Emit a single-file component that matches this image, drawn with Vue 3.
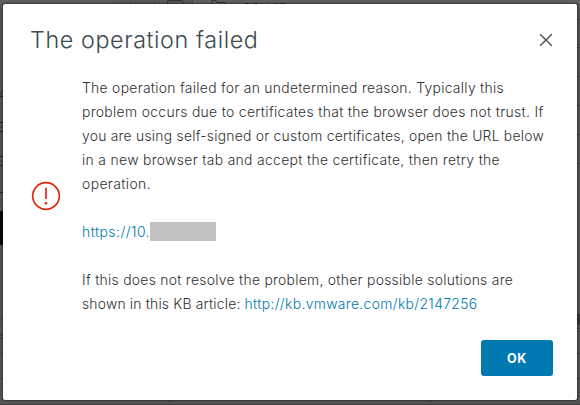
<script setup>
const intro = [
  { text: 'The operation failed for an undetermined reason. Typically this', width: 422 },
  { text: 'problem occurs due to certificates that the browser does not trust. If', width: 461.5 },
  { text: 'you are using self-signed or custom certificates, open the URL below', width: 462 },
  { text: 'in a new browser tab and accept the certificate, then retry the', width: 418 },
  { text: 'operation.', width: 69 },
]

// Spreads a line's letters so that it fills its measure.
const vFit = {
  mounted(el, { value }) {
    const natural = el.getBoundingClientRect().width
    el.style.letterSpacing = `${(value - natural) / el.textContent.length}px`
  },
}
</script>

<template>
  <div class="page">
    <svg class="backdrop" width="580" height="405" viewBox="0 0 580 405" aria-hidden="true">
      <rect width="580" height="405" fill="#555" />
      <rect width="580" height="4" fill="#606060" />
      <rect x="113" width="80" height="4" fill="#585858" />
      <path d="M130.5 0v4M154.5 0v4M192.5 0v4" stroke="#4b4b4b" />
      <path d="M167.500 4V1.500q0-1 1-1h13q1 0 1 1V4" fill="none" stroke="#333" />
      <path d="M212 4V.5h4l1 2h8v1.500" fill="none" stroke="#333" />
      <text x="243" y="10.500" textLength="43" class="behind">CPU 15</text>
      <path d="M0 96.500h3M0 122.500h3M0 131.500h3M0 156.500h3M0 165.500h3M0 192.500h3" stroke="#222" />
      <path d="M0 127.500h3M0 161.500h3M0 318.500h3M0 353.500h3M0 378.500h3" stroke="#414141" />
      <path d="M0 95l3-5" stroke="#26323c" />
      <rect y="211" width="3" height="34" fill="#05090c" />
      <path d="M0 335h3M0 338.500h3" stroke="#263238" />
      <path d="M577 19.500h3M577 47.500h3M577 76.500h3M577 105.500h3M577 134.500h3M577 163.500h3M577 328.500h3M577 353.500h3M577 378.500h3" stroke="#424242" />
      <rect x="577" y="314" width="3" height="11" fill="#383838" />
      <path d="M0 404.500h580M169.500 400v2M430.500 400v2" stroke="#3f3f3f" />
    </svg>

    <section class="dialog" role="dialog" aria-labelledby="title">
      <header class="head">
        <h1 id="title"><span v-fit="228.5">The operation failed</span></h1>
        <button class="close" aria-label="Close">
          <svg width="14" height="14" viewBox="0 0 14 14">
            <path d="M1.200 1.200l11.600 11.600M12.800 1.200L1.200 12.800" />
          </svg>
        </button>
      </header>

      <div class="body">
        <svg class="alert" width="30" height="30" viewBox="0 0 30 30">
          <circle cx="15" cy="15" r="13.300" />
          <path d="M15 6.700v11.300" />
          <circle class="dot" cx="15" cy="22.200" r="1.300" />
        </svg>
        <div class="message">
          <div v-for="line in intro" :key="line.text" class="line">
            <span v-fit="line.width">{{ line.text }}</span>
          </div>
          <div class="line gap">
            <a v-fit="68">https://10.</a><span class="masked"></span>
          </div>
          <div class="line gap"><span v-fit="431">If this does not resolve the problem, other possible solutions are</span></div>
          <div class="line split">
            <span v-fit="158.5">shown in this KB article:</span>
            <a v-fit="233">http://kb.vmware.com/kb/2147256</a>
          </div>
        </div>
      </div>

      <footer class="foot">
        <button class="ok">OK</button>
      </footer>
    </section>
  </div>
</template>

<style>
body {
  background: #555;
  overflow: hidden;
}
</style>

<style scoped>
.page {
  position: relative;
  box-sizing: border-box;
  width: 580px;
  height: 405px;
  padding: 4px 3px 5px;
  font-family: Inter, "Open Sans", sans-serif;
}
.backdrop {
  position: absolute;
  inset: 0;
}
.behind {
  font-size: 11px;
  fill: #222;
}
.dialog {
  position: relative;
  display: flex;
  flex-direction: column;
  box-sizing: border-box;
  height: 396px;
  padding: 20px 24px 24px 28px;
  border-radius: 2px;
  background: #fff;
  box-shadow: 0 0 2px 1px rgba(0, 0, 0, 0.4);
}
.head {
  display: flex;
  justify-content: space-between;
  align-items: center;
  height: 32px;
}
h1 {
  margin: 0 0 0 -1px;
  font-size: 23.300px;
  font-weight: 300;
  line-height: 32px;
  color: #3c4a51;
  white-space: nowrap;
}
button {
  padding: 0;
  border: 0;
  font-family: inherit;
}
.close {
  width: 14px;
  height: 14px;
  background: none;
}
.close svg {
  display: block;
  fill: none;
  stroke: #38494f;
  stroke-width: 1.300;
}
.body {
  display: flex;
  align-items: center;
  gap: 21px;
  margin-top: 20px;
}
.alert {
  flex: none;
  width: 30px;
  height: 30px;
  fill: none;
  stroke: #dc2a0d;
  stroke-width: 1.700;
}
.dot {
  fill: #dc2a0d;
  stroke: none;
}
.message {
  font-size: 13.900px;
  font-weight: 300;
  color: #303030;
}
.line {
  display: flex;
  align-items: center;
  height: 24px;
  line-height: 24px;
  white-space: nowrap;
}
.gap {
  margin-top: 24px;
}
.split {
  gap: 4px;
}
a {
  color: #0079b2;
}
.masked {
  width: 66px;
  height: 19px;
  margin-bottom: 1px;
  background: #c2c2c2;
}
.foot {
  display: flex;
  justify-content: flex-end;
  margin-top: auto;
}
.ok {
  width: 72px;
  height: 36px;
  border-radius: 3px;
  background: #0079b0;
  color: #fff;
  font-size: 12.500px;
  font-weight: 700;
  letter-spacing: 0.700px;
}
</style>
